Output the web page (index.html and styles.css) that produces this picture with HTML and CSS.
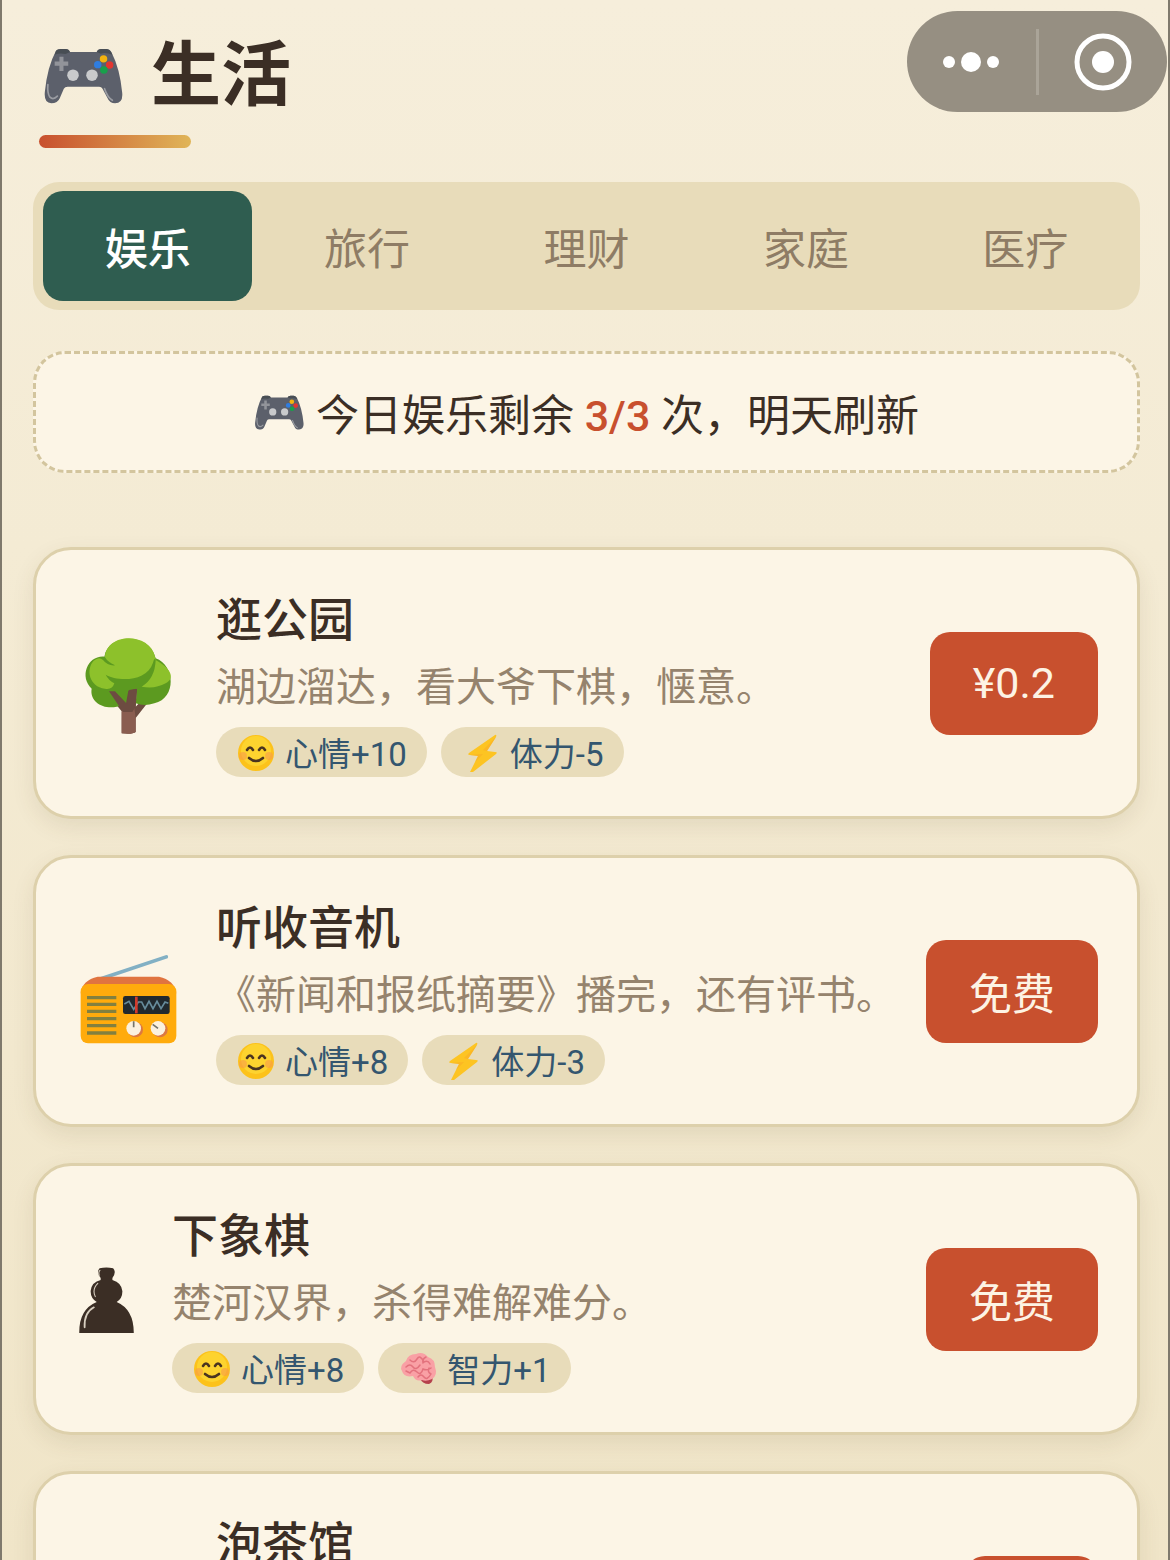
FILE: index.html
```html
<!DOCTYPE html>
<html lang="zh-CN">
<head>
<meta charset="utf-8">
<meta name="viewport" content="width=device-width, initial-scale=1">
<title>生活</title>
<link rel="stylesheet" href="styles.css">
</head>
<body>
<svg class="sprite" aria-hidden="true">
  <symbol id="gamepad" viewBox="0 0 235 165">
    <path fill="#5c606b" d="M38 8Q42 3 52 3H66Q76 3 79 12H158Q161 3 172 3H186Q198 4 202 14Q226 60 233 132Q236 162 212 163Q196 163 190 148L175 120Q172 114 165 114H72Q64 114 61 120L49 148Q43 163 24 163Q2 162 5 130Q12 56 38 8Z"/>
    <path fill="#484e54" d="M38 8Q42 3 52 3H66Q76 3 79 12L66 18Q48 14 34 20ZM158 12Q161 3 172 3H186Q198 4 204 20Q184 12 170 17Z"/>
    <path fill="none" stroke="#9a9ca2" stroke-width="5" stroke-linecap="round" d="M14 108Q12 134 20 145Q30 154 42 142M181 120Q190 146 204 154"/>
    <path fill="#92949a" d="M48 26h12v14h14v12h-14v16h-12v-16h-14v-12h14z"/>
    <circle cx="88" cy="80" r="17" fill="#c9cacc"/><circle cx="144" cy="80" r="17" fill="#c9cacc"/>
    <circle cx="178" cy="32" r="11" fill="#f3b30f"/><circle cx="196" cy="50" r="11" fill="#e2352f"/>
    <circle cx="161" cy="49" r="11" fill="#2f7de0"/><circle cx="179" cy="65" r="11" fill="#18a04b"/>
  </symbol>
  <symbol id="smile" viewBox="0 0 40 40">
    <circle cx="20" cy="21" r="18" fill="#fcc21b"/>
    <circle cx="20" cy="19" r="15" fill="#fdd32f"/>
    <circle cx="7" cy="24" r="4" fill="#f7974d" opacity=".55"/><circle cx="33" cy="24" r="4" fill="#f7974d" opacity=".55"/>
    <path fill="none" stroke="#4a3420" stroke-width="2.6" stroke-linecap="round" d="M11 18q3-5 6 0M23 18q3-5 6 0M13 26q7 6 14 0"/>
  </symbol>
  <symbol id="bolt" viewBox="0 0 40 40">
    <path fill="#fdc422" d="M34 3L8 21Q6 23 9 23L17 24L9 40Q9 42 12 40L35 22Q37 20 34 20L26 19L35 5Q36 2 34 3Z"/>
    <path fill="#f9a925" d="M9 23L17 24L14 30L22 22ZM26 19L35 5L22 18Z" opacity=".5"/>
  </symbol>
  <symbol id="brain" viewBox="0 0 40 40">
    <path fill="#b5414c" d="M22 30L34 28Q36 34 31 36Q24 36 22 30Z"/>
    <path fill="#f9a0a5" d="M8 13Q10 6 18 6Q25 3 30 9Q37 11 37 19Q40 27 34 31Q28 34 24 32Q18 34 15 28Q6 30 4 23Q1 18 8 13Z"/>
    <path fill="none" stroke="#e3727d" stroke-width="1.5" stroke-linecap="round" d="M8 19q4-4 7 0t7-2M12 12q4 4 7-1t7 3q4-2 6 2M12 25q3-5 7-1t6-3q4 2 8-1M20 29q3-4 6 0t7-3M28 9q-4 2-3 6M31 20q-2 4 2 6M8 23l4 2"/>
  </symbol>
  <symbol id="tree" viewBox="168 270 318 318">
    <path fill="#6d4c41" d="M270 452L312 494L322 448L355 445L350 500L372 478L386 488L350 534V576Q340 584 308 580V514L270 468Z"/>
    <path fill="#8a5d50" d="M308 516Q312 490 344 490L350 534V576Q340 584 308 580Z"/>
    <path fill="#5c9a20" d="M256 350C266 280 392 275 410 355C468 375 474 475 406 490Q376 500 350 490L354 446L328 452L320 496L288 460L278 460L310 494C266 516 210 490 218 446C180 410 206 346 256 350Z"/>
    <path fill="#8dc12b" d="M258 352C262 276 392 276 408 350L411 362Q406 350 402 368C382 428 294 424 260 404Q268 420 286 430Q280 450 258 446C210 440 200 388 224 362Q240 348 252 360Q266 378 288 376Q266 366 258 352ZM410 360C452 382 472 414 440 430Q408 448 368 440Q408 416 410 360Z"/>
    <path fill="#6d4c41" d="M270 454H288L324 492L330 450L354 446L350 500L340 516H312Z"/>
  </symbol>
  <symbol id="radio" viewBox="48 24 318 318">
    <path d="M115 144L322 75Q330 76 326 85L150 144Z" fill="#82b0c4"/>
    <path d="M65 190Q70 150 116 140H300Q346 150 352 190Z" fill="#e07440"/>
    <rect x="65" y="162" width="287" height="178" rx="22" fill="#ffab0c"/>
    <path stroke="#82803f" stroke-width="10" d="M84 203h88M84 223h88M84 244h88M84 266h88M84 287h88M84 309h88"/>
    <rect x="192" y="198" width="140" height="54" rx="7" fill="#21292e"/>
    <path fill="none" stroke="#668b9b" stroke-width="5" d="M196 222l14-8 14 24 14-22h10l10 20 12-22 12 22 12-22 12 22 12-20 10 4"/>
    <path stroke="#d23b2c" stroke-width="8" d="M232 200v50"/>
    <circle cx="229" cy="299" r="23" fill="#dc7841"/><circle cx="303" cy="299" r="23" fill="#dc7841"/>
    <circle cx="224" cy="295" r="22" fill="#fbf1df"/><circle cx="297" cy="295" r="22" fill="#fbf1df"/>
    <path stroke="#73736b" stroke-width="5" d="M224 274v18M281 283l16 12"/>
  </symbol>
  <symbol id="pawn" viewBox="45 138 174 318" preserveAspectRatio="none">
    <path fill="#3b2e25" d="M57 399Q56 328 106 306Q88 294 89 272Q92 246 117 240V234Q104 216 114 205Q133 200 152 205Q162 216 150 234V240Q176 248 178 274Q178 296 162 306Q210 328 210 399Z"/>
    <path fill="none" stroke="#d8cfc0" stroke-width="5" stroke-linecap="round" d="M72 382Q70 338 98 322"/>
    <path fill="none" stroke="#d8cfc0" stroke-width="3" stroke-linecap="round" d="M102 290Q92 268 109 250M113 226Q110 216 115 211"/>
  </symbol>
  <symbol id="tea" viewBox="0 0 106 106">
    <path fill="#e8ece9" d="M12 34H94Q94 88 53 92Q12 88 12 34Z"/>
    <ellipse cx="53" cy="34" rx="41" ry="14" fill="#a3b95a"/>
  </symbol>
</svg>

<main class="app">
  <header class="header">
    <h1 class="title"><svg class="title-icon" aria-hidden="true"><use href="#gamepad"/></svg>生活</h1>
  </header>

  <nav class="tabs" aria-label="生活分类">
    <button class="tab tab-active" type="button">娱乐</button>
    <button class="tab" type="button">旅行</button>
    <button class="tab" type="button">理财</button>
    <button class="tab" type="button">家庭</button>
    <button class="tab" type="button">医疗</button>
  </nav>

  <p class="notice">
    <svg class="notice-icon" aria-hidden="true"><use href="#gamepad"/></svg>
    <span>今日娱乐剩余 <strong class="count">3/3</strong> 次，明天刷新</span>
  </p>

  <section class="list">
    <article class="card">
      <svg class="card-icon" aria-hidden="true"><use href="#tree"/></svg>
      <div class="card-body">
        <h2 class="card-title">逛公园</h2>
        <p class="card-desc">湖边溜达，看大爷下棋，惬意。</p>
        <div class="chips">
          <span class="chip"><svg class="chip-icon" aria-hidden="true"><use href="#smile"/></svg>心情+10</span>
          <span class="chip"><svg class="chip-icon" aria-hidden="true"><use href="#bolt"/></svg>体力-5</span>
        </div>
      </div>
      <button class="price" type="button">¥0.2</button>
    </article>

    <article class="card">
      <svg class="card-icon" aria-hidden="true"><use href="#radio"/></svg>
      <div class="card-body">
        <h2 class="card-title">听收音机</h2>
        <p class="card-desc">《新闻和报纸摘要》播完，还有评书。</p>
        <div class="chips">
          <span class="chip"><svg class="chip-icon" aria-hidden="true"><use href="#smile"/></svg>心情+8</span>
          <span class="chip"><svg class="chip-icon" aria-hidden="true"><use href="#bolt"/></svg>体力-3</span>
        </div>
      </div>
      <button class="price" type="button">免费</button>
    </article>

    <article class="card">
      <svg class="card-icon card-icon-narrow" aria-hidden="true"><use href="#pawn"/></svg>
      <div class="card-body">
        <h2 class="card-title">下象棋</h2>
        <p class="card-desc">楚河汉界，杀得难解难分。</p>
        <div class="chips">
          <span class="chip"><svg class="chip-icon" aria-hidden="true"><use href="#smile"/></svg>心情+8</span>
          <span class="chip"><svg class="chip-icon" aria-hidden="true"><use href="#brain"/></svg>智力+1</span>
        </div>
      </div>
      <button class="price" type="button">免费</button>
    </article>

    <article class="card">
      <svg class="card-icon" aria-hidden="true"><use href="#tea"/></svg>
      <div class="card-body">
        <h2 class="card-title">泡茶馆</h2>
        <p class="card-desc"></p>
        <div class="chips"></div>
      </div>
      <button class="price" type="button">¥1</button>
    </article>
  </section>
</main>

<div class="capsule">
  <button class="capsule-btn" type="button" aria-label="更多">
    <svg width="60" height="60" viewBox="0 0 60 60" fill="#fff"><circle cx="8" cy="30" r="6"/><circle cx="30" cy="30" r="10"/><circle cx="52" cy="30" r="6"/></svg>
  </button>
  <span class="capsule-line"></span>
  <button class="capsule-btn" type="button" aria-label="关闭">
    <svg width="60" height="60" viewBox="0 0 60 60"><circle cx="30" cy="30" r="26" fill="none" stroke="#fff" stroke-width="5"/><circle cx="30" cy="30" r="11" fill="#fff"/></svg>
  </button>
</div>
</body>
</html>
```
FILE: styles.css
```css
* {
  box-sizing: border-box;
}

body {
  margin: 0;
  color: #3b2e25;
  font-family: Roboto, "Noto Sans CJK SC", sans-serif;
  font-size: 43px;
}

h1, h2, p {
  margin: 0;
}

button {
  padding: 0;
  border: 0;
  background: none;
  color: inherit;
  font: inherit;
  cursor: pointer;
}

.sprite {
  position: absolute;
  width: 0;
  height: 0;
}

.app {
  height: 100vh;
  padding: 28px 28px 40px 31px;
  overflow-y: auto;
  scrollbar-width: none;
  border: solid #7f796c;
  border-width: 0 2px;
  background: linear-gradient(#f6eedb, #f4ebd4 35%, #f0e5c8);
}

/* Header */
.header {
  margin-bottom: 34px;
  padding-left: 6px;
}

.title {
  display: flex;
  align-items: center;
  gap: 28px;
  height: 96px;
  padding-left: 4px;
  font-size: 70px;
  font-weight: 700;
  line-height: 96px;
}

.title-icon {
  width: 80px;
  height: 56px;
}

.header::after {
  content: "";
  display: block;
  width: 152px;
  height: 13px;
  margin-top: 11px;
  border-radius: 7px;
  background: linear-gradient(90deg, #c8502e, #e0b558);
}

/* Tabs */
.tabs {
  display: flex;
  gap: 10px;
  margin-bottom: 41px;
  padding: 9px 10px;
  border-radius: 26px;
  background: #e8dcba;
}

.tab {
  flex: 1;
  height: 110px;
  border-radius: 20px;
  color: #8e7c65;
}

.tab-active {
  background: #2f5d50;
  color: #fff;
  font-weight: 500;
}

/* Remaining count */
.notice {
  display: flex;
  align-items: center;
  justify-content: center;
  gap: 12px;
  min-height: 122px;
  margin-bottom: 74px;
  border: 3px dashed #d3c59e;
  border-radius: 32px;
  background: #fcf5e6;
}

.notice-icon {
  width: 50px;
  height: 35px;
}

.count {
  color: #c8502e;
  font-weight: 500;
}

/* Activity cards */
.list {
  display: grid;
  gap: 36px;
}

.card {
  display: flex;
  align-items: center;
  padding: 39px;
  border: 3px solid #ddd0ab;
  border-radius: 38px;
  background: #fcf5e6;
  box-shadow: 0 8px 22px rgba(90, 70, 30, 0.1);
}

.card-icon {
  flex: none;
  width: 106px;
  height: 106px;
  margin-right: 35px;
}

.card-icon-narrow {
  width: 62px;
}

.card-body {
  flex: 1;
  min-width: 0;
}

.card-title {
  font-size: 46px;
  font-weight: 500;
  line-height: 62px;
}

.card-desc {
  min-height: 60px;
  margin: 7px 0 9px;
  color: #95836d;
  font-size: 40px;
  line-height: 60px;
  white-space: nowrap;
}

.chips {
  display: flex;
  gap: 14px;
  min-height: 50px;
}

.chip {
  display: flex;
  align-items: center;
  gap: 9px;
  height: 50px;
  padding: 0 20px;
  border-radius: 25px;
  background: #e8dcba;
  color: #34566f;
  font-size: 33px;
}

.chip-icon {
  width: 40px;
  height: 40px;
}

.price {
  flex: none;
  height: 103px;
  padding: 0 43px;
  border-radius: 20px;
  background: #c8502e;
  color: #fdf3e4;
}

/* Floating window controls */
.capsule {
  position: fixed;
  top: 11px;
  right: 3px;
  display: flex;
  align-items: center;
  width: 260px;
  height: 101px;
  border-radius: 51px;
  background: #968f82;
}

.capsule-btn {
  display: flex;
  flex: 1;
  align-items: center;
  justify-content: center;
  height: 100%;
}

.capsule-line {
  width: 3px;
  height: 66px;
  background: #aaa498;
}
```
